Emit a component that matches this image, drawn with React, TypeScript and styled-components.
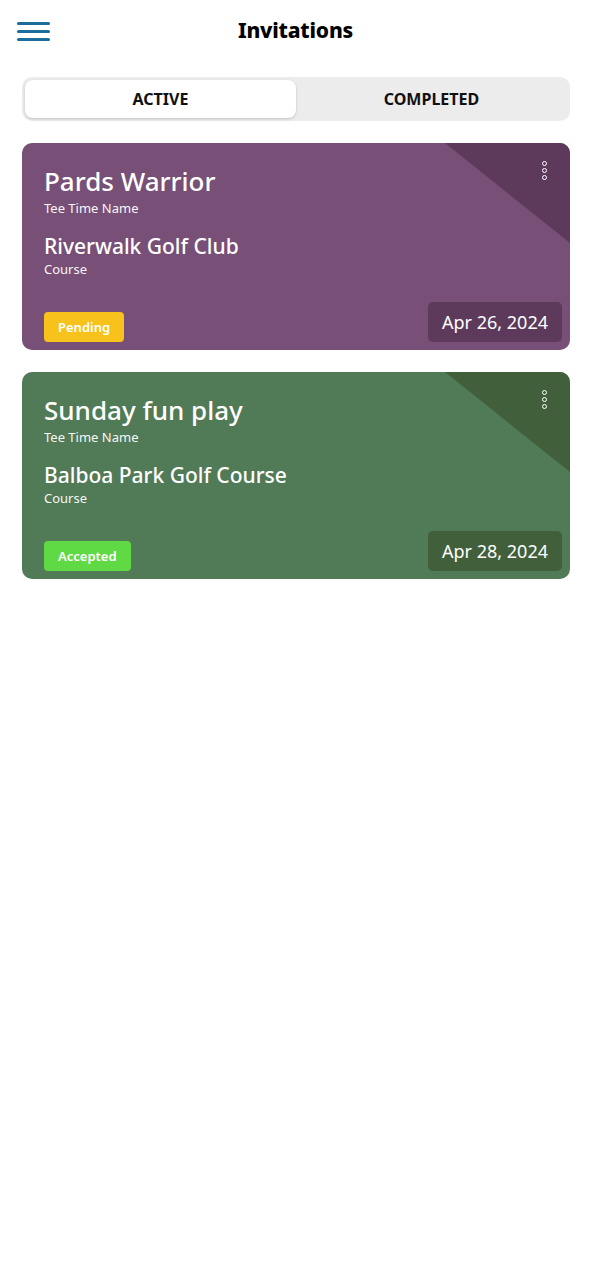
import React from "react";
import styled, { createGlobalStyle } from "styled-components";

const Global = createGlobalStyle`
  html, body { margin: 0; padding: 0; background: #ffffff; }
  body { font-family: "Noto Sans", "Open Sans", sans-serif; }
  * { box-sizing: border-box; }
`;

const Page = styled.div`
  width: 591px;
  min-height: 1280px;
  background: #fff;
  padding: 0 21px 0 22px;
`;

const Header = styled.header`
  height: 60px;
  display: grid;
  grid-template-columns: 40px 1fr 40px;
  align-items: center;
  margin: 0 -4px 0 -5px;
`;

const Burger = styled.button`
  width: 33px;
  height: 19px;
  padding: 0;
  border: none;
  background: none;
  display: flex;
  flex-direction: column;
  justify-content: space-between;
  margin-top: 2px;
  span {
    display: block;
    height: 3px;
    border-radius: 2px;
    background: #1c6c9c;
  }
`;

const Title = styled.h1`
  margin: 0;
  text-align: center;
  font-size: 21px;
  font-weight: 800;
  color: #000;
  letter-spacing: -0.2px;
`;

const Tabs = styled.div`
  margin-top: 17px;
  height: 44px;
  background: #ececec;
  border-radius: 10px;
  padding: 3px;
  display: grid;
  grid-template-columns: 1fr 1fr;
`;

const Tab = styled.button<{ $active?: boolean }>`
  border: none;
  border-radius: 8px;
  font-family: inherit;
  font-size: 16px;
  font-weight: 700;
  color: #111;
  background: ${(p) => (p.$active ? "#fff" : "transparent")};
  box-shadow: ${(p) => (p.$active ? "0 1px 3px rgba(0,0,0,0.18)" : "none")};
`;

const List = styled.div`
  margin-top: 22px;
  display: flex;
  flex-direction: column;
  gap: 22px;
`;

const Card = styled.div<{ $bg: string }>`
  position: relative;
  overflow: hidden;
  height: 207px;
  border-radius: 10px;
  background: ${(p) => p.$bg};
  color: #fff;
  padding: 21px 8px 8px 22px;
  display: flex;
  flex-direction: column;
`;

const Corner = styled.div<{ $bg: string }>`
  position: absolute;
  top: 0;
  right: 0;
  width: 125px;
  height: 100px;
  background: ${(p) => p.$bg};
  clip-path: polygon(0 0, 100% 0, 100% 100%);
`;

const Dots = styled.div`
  position: absolute;
  top: 18px;
  right: 23px;
  display: flex;
  flex-direction: column;
  gap: 2px;
  span {
    width: 5px;
    height: 5px;
    border-radius: 50%;
    border: 1.4px solid #fff;
  }
`;

const Name = styled.div`
  font-size: 26px;
  line-height: 34px;
  font-weight: 500;
  position: relative;
`;

const Label = styled.div`
  margin-top: 2px;
  font-size: 13px;
  line-height: 17px;
  opacity: 0.95;
`;

const Course = styled.div`
  margin-top: 16px;
  font-size: 21px;
  line-height: 26px;
  font-weight: 500;
`;

const Footer = styled.div`
  margin-top: auto;
  display: flex;
  justify-content: space-between;
  align-items: flex-end;
`;

const Badge = styled.div<{ $bg: string }>`
  height: 30px;
  padding: 0 14px;
  border-radius: 4px;
  background: ${(p) => p.$bg};
  font-size: 13px;
  font-weight: 600;
  display: flex;
  align-items: center;
`;

const DateBox = styled.div<{ $bg: string }>`
  height: 40px;
  padding: 0 14px;
  border-radius: 5px;
  background: ${(p) => p.$bg};
  font-size: 18px;
  display: flex;
  align-items: center;
`;

type Inv = {
  name: string;
  course: string;
  status: string;
  statusBg: string;
  date: string;
  bg: string;
  dark: string;
};

const items: Inv[] = [
  {
    name: "Pards Warrior",
    course: "Riverwalk Golf Club",
    status: "Pending",
    statusBg: "#f7c21b",
    date: "Apr 26, 2024",
    bg: "#774f77",
    dark: "#5d3a5b",
  },
  {
    name: "Sunday fun play",
    course: "Balboa Park Golf Course",
    status: "Accepted",
    statusBg: "#5fd944",
    date: "Apr 28, 2024",
    bg: "#517a57",
    dark: "#415f3b",
  },
];

export default function App() {
  return (
    <Page>
      <Global />
      <Header>
        <Burger aria-label="menu">
          <span />
          <span />
          <span />
        </Burger>
        <Title>Invitations</Title>
        <div />
      </Header>
      <Tabs>
        <Tab $active>ACTIVE</Tab>
        <Tab>COMPLETED</Tab>
      </Tabs>
      <List>
        {items.map((it) => (
          <Card key={it.name} $bg={it.bg}>
            <Corner $bg={it.dark} />
            <Dots>
              <span />
              <span />
              <span />
            </Dots>
            <Name>{it.name}</Name>
            <Label>Tee Time Name</Label>
            <Course>{it.course}</Course>
            <Label>Course</Label>
            <Footer>
              <Badge $bg={it.statusBg}>{it.status}</Badge>
              <DateBox $bg={it.dark}>{it.date}</DateBox>
            </Footer>
          </Card>
        ))}
      </List>
    </Page>
  );
}
